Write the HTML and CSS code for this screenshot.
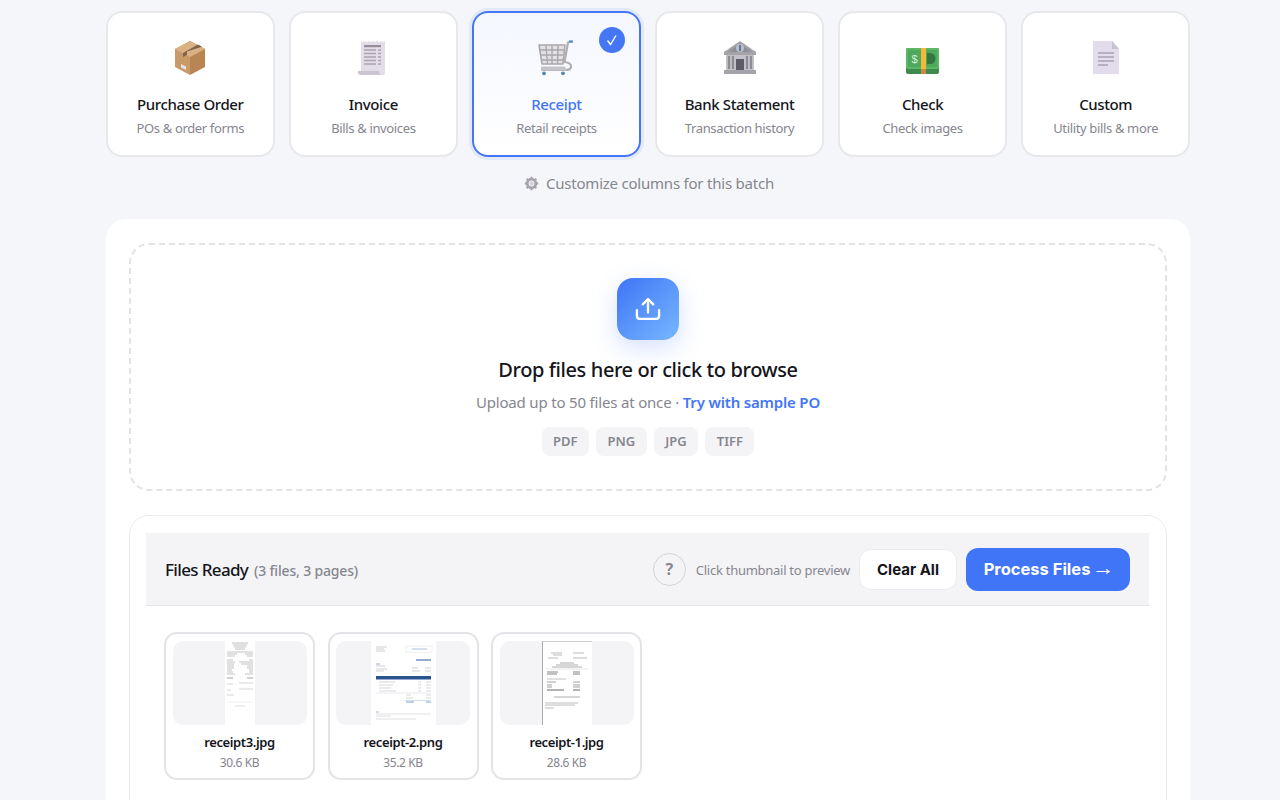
FILE: index.html
```html
<!DOCTYPE html>
<html>
<head>
  <title>Document Extractor</title>
  <link rel="stylesheet" href="styles.css">
</head>
<body>
  <div class="page">
    <div class="doc-types">
      <div class="doc-card">
        <svg class="doc-icon" viewBox="0 0 36 36">
          <path d="M18 1 L33 9 V27 L18 35 Z" fill="#b98553"/>
          <path d="M18 1 L3 9 V27 L18 35 Z" fill="#c99a68"/>
          <path d="M18 1 L33 9 L18 17 L3 9 Z" fill="#d9b183"/>
          <path d="M26 4.5 L11 13 V17 L15 15 L15 11.5 L30 6.8 Z" fill="#7f6450"/>
          <path d="M9 24 L14 26.5 V30 L9 27.5 Z" fill="#e5e2e4"/>
        </svg>
        <div class="doc-name">Purchase Order</div>
        <div class="doc-sub">POs &amp; order forms</div>
      </div>
      <div class="doc-card">
        <svg class="doc-icon" viewBox="0 0 36 36">
          <path d="M6 1 L8 2 L10 1 L12 2 L14 1 L16 2 L18 1 L20 2 L22 1 L24 2 L26 1 L28 2 L30 1 V33 C30 35 28 35 27 35 H8 C5 35 2 34 3 31 H6 Z" fill="#e2dde7"/>
          <path d="M3 31 H24 C24 33 25 35 27 35 H8 C5 35 2 34 3 31 Z" fill="#cbc5d2"/>
          <rect x="9" y="5" width="17" height="2.2" fill="#968d9d"/>
          <path d="M9 10 H21 M23 10 H26 M9 13.5 H21 M23 13.5 H26 M9 17 H21 M23 17 H26 M9 20.5 H21 M23 20.5 H26 M9 24 H21 M23 24 H26" stroke="#aca3b3" stroke-width="1.3"/>
        </svg>
        <div class="doc-name">Invoice</div>
        <div class="doc-sub">Bills &amp; invoices</div>
      </div>
      <div class="doc-card selected">
        <span class="check-badge">
          <svg viewBox="0 0 14 14" width="14" height="14"><path d="M2.5 7.5 L5.5 11.5 L11 2.5" fill="none" stroke="#fff" stroke-width="1.4"/></svg>
        </span>
        <svg class="doc-icon" viewBox="0 0 36 36">
          <path d="M1 5 H27 L25 24 H4 Z" fill="#e2e1e4" stroke="#a9a7ac" stroke-width="1.6" stroke-linejoin="round"/>
          <path d="M2 10 H26 M3 15 H25.5 M3.5 20 H25 M8 5.5 L9.5 24 M14 5.5 V24 M20 5.5 L19.5 24" stroke="#a9a7ac" stroke-width="1.4"/>
          <path d="M34 1 L30 2.5 L26.5 22 C31 22.5 33.5 24 33 27 C32.5 30 29 30 27 30 H3" fill="none" stroke="#b0aeb3" stroke-width="2.2"/>
          <path d="M3 26.5 H26 C27.5 26.5 28 28 28 30.5 H3 Z" fill="#c6c4c9"/>
          <rect x="31" y="0.5" width="4" height="2.2" fill="#5b93c5"/>
          <circle cx="6" cy="33.3" r="1.9" fill="#4f88bb"/>
          <circle cx="25" cy="33.3" r="1.9" fill="#4f88bb"/>
        </svg>
        <div class="doc-name">Receipt</div>
        <div class="doc-sub">Retail receipts</div>
      </div>
      <div class="doc-card">
        <svg class="doc-icon" viewBox="0 0 36 36">
          <path d="M18 1 L34 12 V15 H2 V12 Z" fill="#a5a3aa"/>
          <path d="M18 3.5 L30 12 H6 Z" fill="#8f8d95"/>
          <circle cx="18" cy="8" r="4" fill="#c0bec5"/>
          <rect x="17" y="5" width="2" height="6" fill="#4d7fb3"/>
          <rect x="4" y="15" width="28" height="15" fill="#c4c2c8"/>
          <path d="M7 16 V29 M11 16 V29 M25 16 V29 M29 16 V29" stroke="#8d8b93" stroke-width="2.2"/>
          <rect x="14" y="19" width="8" height="11" fill="#5d5b63"/>
          <rect x="2" y="30" width="32" height="4" fill="#a5a3aa"/>
        </svg>
        <div class="doc-name">Bank Statement</div>
        <div class="doc-sub">Transaction history</div>
      </div>
      <div class="doc-card">
        <svg class="doc-icon" viewBox="0 0 36 36">
          <rect x="1" y="8" width="33" height="26" rx="2" fill="#3f8a4e"/>
          <rect x="1" y="8" width="33" height="21" rx="2" fill="#5cb866"/>
          <rect x="3" y="10" width="29" height="17" fill="#4fa85b"/>
          <path d="M22 13 H25 A5.5 5.5 0 0 1 25 24 H22 Z" fill="#34763f"/>
          <rect x="16" y="8" width="5" height="21" fill="#f3b93a"/>
          <rect x="16" y="29" width="5" height="5" fill="#c98a45"/>
          <text x="9.5" y="23" class="bill-sign">$</text>
        </svg>
        <div class="doc-name">Check</div>
        <div class="doc-sub">Check images</div>
      </div>
      <div class="doc-card">
        <svg class="doc-icon" viewBox="0 0 36 36">
          <path d="M5 1 H24 L31 9 V34 H5 Z" fill="#e2dcec"/>
          <path d="M24 1 L31 9 H24 Z" fill="#c7c2cf"/>
          <path d="M10 13 H26 M10 17 H26 M10 21 H26 M10 25 H20" stroke="#a8a1b2" stroke-width="1.5"/>
        </svg>
        <div class="doc-name">Custom</div>
        <div class="doc-sub">Utility bills &amp; more</div>
      </div>
    </div>

    <div class="customize">
      <svg viewBox="0 0 16 16" width="15" height="15">
        <circle cx="8" cy="8" r="4.6" fill="none" stroke="#a7a3ae" stroke-width="3"/>
        <path d="M8 0.8 V3 M8 13 V15.2 M0.8 8 H3 M13 8 H15.2 M2.9 2.9 L4.5 4.5 M11.5 11.5 L13.1 13.1 M2.9 13.1 L4.5 11.5 M11.5 4.5 L13.1 2.9" stroke="#a7a3ae" stroke-width="2.2"/>
        <circle cx="8" cy="8" r="2.4" fill="#d6d3da"/>
      </svg>
      Customize columns for this batch
    </div>

    <div class="panel">
      <div class="dropzone">
        <div class="upload-tile">
          <svg viewBox="0 0 24 24" width="28" height="28" fill="none" stroke="#fff" stroke-width="2" stroke-linecap="round" stroke-linejoin="round">
            <path d="M12 15 V3.5 M7.5 8 L12 3.5 L16.5 8"/>
            <path d="M2.5 13 V18 A2.5 2.5 0 0 0 5 20.5 H19 A2.5 2.5 0 0 0 21.5 18 V13"/>
          </svg>
        </div>
        <div class="drop-title">Drop files here or click to browse</div>
        <div class="drop-sub">Upload up to 50 files at once · <a class="sample-link">Try with sample PO</a></div>
        <div class="formats">
          <span class="format">PDF</span>
          <span class="format">PNG</span>
          <span class="format">JPG</span>
          <span class="format">TIFF</span>
        </div>
      </div>

      <div class="files-box">
        <div class="files-header">
          <div class="files-title">Files Ready <span class="files-count">(3 files, 3 pages)</span></div>
          <div class="files-actions">
            <span class="help">?</span>
            <span class="hint">Click thumbnail to preview</span>
            <button class="btn-clear">Clear All</button>
            <button class="btn-process">Process Files <span class="arrow">→</span></button>
          </div>
        </div>

        <div class="thumbs">
          <div class="thumb-card">
            <div class="thumb">
              <svg class="receipt-a" viewBox="0 0 30 84">
                <rect width="30" height="84" fill="#fff"/>
                <path d="M7 2 H23 M8 4 H22 M9 6 H21 M10 8 H20" stroke="#999" stroke-width="0.6"/>
                <path d="M2 11 H28 M2 13 H12 M20 13 H28 M2 15 H10 M22 15 H28 M2 19 H8 M24 19 H28 M2 21 H10 M14 21 H28 M2 23 H9 M16 23 H28 M2 25 H9 M22 25 H28 M2 27 H9 M22 27 H28 M2 29 H7 M24 29 H28 M2 31 H8 M24 31 H28 M2 33 H10 M20 33 H28" stroke="#aaa" stroke-width="0.7"/>
                <path d="M2 37 H8 M22 37 H28" stroke="#888" stroke-width="0.8"/>
                <path d="M2 43 H8 M14 42 H28 M2 49 H6 M14 48 H28 M2 54 H9" stroke="#bbb" stroke-width="0.6"/>
                <path d="M2 61 H28" stroke="#ddd" stroke-width="0.5"/>
                <path d="M10 65 H20" stroke="#ccc" stroke-width="0.7"/>
              </svg>
            </div>
            <div class="thumb-name">receipt3.jpg</div>
            <div class="thumb-size">30.6 KB</div>
          </div>
          <div class="thumb-card">
            <div class="thumb">
              <svg class="receipt-b" viewBox="0 0 65 84">
                <rect width="65" height="84" fill="#fff"/>
                <path d="M5 6 H16 M5 8 H13 M5 10 H14" stroke="#bbb" stroke-width="0.7"/>
                <rect x="35" y="5" width="26" height="6.5" fill="#fff" stroke="#e4e8f0" stroke-width="0.6"/>
                <path d="M41 8 H56" stroke="#a3b8d8" stroke-width="0.9"/>
                <path d="M45 19 H60" stroke="#6f91c4" stroke-width="1.6"/>
                <path d="M5 23 H9" stroke="#6f91c4" stroke-width="0.7"/>
                <path d="M5 25 H14 M5 28 H16 M5 30 H13 M41 27 H47 M54 27 H60 M41 30 H49 M54 30 H60" stroke="#bbb" stroke-width="0.7"/>
                <rect x="5" y="35" width="55" height="3.5" fill="#2a5390"/>
                <path d="M8 41 H24 M47 41 H50 M55 41 H60 M8 44 H22 M47 44 H50 M55 44 H60 M8 47 H20 M47 47 H50 M55 47 H60 M8 50 H25 M47 50 H50 M55 50 H60" stroke="#c6c6c6" stroke-width="0.7"/>
                <path d="M5 52 H60" stroke="#cdd6e4" stroke-width="0.5"/>
                <path d="M35 54 H40 M55 54 H60 M35 57 H42 M55 57 H60" stroke="#c6c6c6" stroke-width="0.7"/>
                <path d="M34 59.5 H60" stroke="#a9bcd8" stroke-width="0.5"/>
                <path d="M35 61 H43 M55 61 H60" stroke="#6685b3" stroke-width="0.8"/>
                <path d="M5 71 H8" stroke="#6f91c4" stroke-width="0.6"/>
                <path d="M5 73 H60 M5 75 H20 M5 78 H45" stroke="#ccc" stroke-width="0.6"/>
              </svg>
            </div>
            <div class="thumb-name">receipt-2.png</div>
            <div class="thumb-size">35.2 KB</div>
          </div>
          <div class="thumb-card">
            <div class="thumb">
              <svg class="receipt-c" viewBox="0 0 50 84">
                <rect width="50" height="84" fill="#fff"/>
                <rect width="1" height="84" fill="#aaa"/>
                <rect width="50" height="0.7" fill="#bbb"/>
                <path d="M9 12 H20 M31 12 H42 M11 14 H20 M6 17 H16 M31 17 H45" stroke="#aaa" stroke-width="0.8"/>
                <path d="M18 22 H32 M14 24 H36 M10 26 H40" stroke="#999" stroke-width="0.8"/>
                <path d="M4 28 H46" stroke="#ccc" stroke-width="0.5"/>
                <path d="M5 31 H16 M31 31 H38 M5 33 H15 M31 33 H38" stroke="#777" stroke-width="0.9"/>
                <path d="M5 38 H24" stroke="#aaa" stroke-width="0.7"/>
                <path d="M5 41 H14 M31 41 H38 M5 44 H10 M31 44 H38 M5 46 H10 M31 46 H38" stroke="#999" stroke-width="0.9"/>
                <path d="M5 49 H22 M31 49 H38" stroke="#666" stroke-width="1"/>
                <path d="M12 56 H38" stroke="#999" stroke-width="0.8"/>
                <path d="M3 62 H36 M3 64 H33 M3 67 H12" stroke="#aaa" stroke-width="0.8"/>
              </svg>
            </div>
            <div class="thumb-name">receipt-1.jpg</div>
            <div class="thumb-size">28.6 KB</div>
          </div>
        </div>
      </div>
    </div>
  </div>
</body>
</html>
```

FILE: styles.css
```css
/* page */
html, body {
  height: 800px;
  overflow: hidden;
}

body {
  margin: 0;
  background-color: #f5f6fa;
  font-family: "Noto Sans", Arial, sans-serif;
  color: #15151c;
}

.page {
  width: 1084px;
  height: 800px;
  box-sizing: border-box;
  margin-left: 106px;
  padding-top: 11px;
  overflow: hidden;
}

/* document type cards */
.doc-types {
  display: grid;
  grid-template-columns: repeat(6, 1fr);
  gap: 14.4px;
  padding: 0 0 4px;
}

.doc-card {
  position: relative;
  height: 146px;
  box-sizing: border-box;
  border: 2px solid #e8e8ec;
  border-radius: 16px;
  background-color: #fff;
  display: flex;
  flex-direction: column;
  align-items: center;
  padding-top: 27px;
}

.doc-card.selected {
  border-color: #4476f6;
  background: linear-gradient(180deg, #f5f7ff 0%, #fff 100%);
  box-shadow: 0 0 0 3px rgba(68, 118, 246, 0.1);
}

.doc-card.selected .doc-name {
  color: #4476f6;
}

.doc-icon {
  width: 36px;
  height: 36px;
  margin-bottom: 18px;
}

.bill-sign {
  font-family: "Liberation Sans", sans-serif;
  font-size: 11px;
  fill: #d8f0da;
  text-anchor: middle;
}

.doc-name {
  font-size: 15px;
  font-weight: 550;
  line-height: 20px;
  letter-spacing: -0.38px;
  margin-bottom: 4px;
}

.doc-sub {
  font-size: 13px;
  line-height: 20px;
  letter-spacing: -0.35px;
  color: #86868f;
}

.check-badge {
  position: absolute;
  top: 14px;
  right: 14px;
  width: 26px;
  height: 26px;
  border-radius: 50%;
  background-color: #4476f6;
  display: flex;
  align-items: center;
  justify-content: center;
}

.customize {
  display: flex;
  justify-content: center;
  align-items: center;
  gap: 7px;
  height: 20px;
  margin-top: 12px;
  padding-left: 2px;
  font-size: 15px;
  letter-spacing: -0.22px;
  color: #86868f;
}

/* main panel */
.panel {
  margin-top: 26px;
  background-color: #fff;
  border-radius: 20px;
  padding: 24px 23px 60px;
}

.dropzone {
  height: 248px;
  box-sizing: border-box;
  border: 2px dashed #e2e2e7;
  border-radius: 20px;
  display: flex;
  flex-direction: column;
  align-items: center;
  padding-top: 33px;
}

.upload-tile {
  width: 62px;
  height: 62px;
  border-radius: 16px;
  background: linear-gradient(135deg, #3f74f6 0%, #76b8fe 100%);
  box-shadow: 0 8px 24px rgba(68, 118, 246, 0.22);
  display: flex;
  align-items: center;
  justify-content: center;
}

.drop-title {
  margin-top: 16px;
  font-size: 20px;
  font-weight: 550;
  line-height: 28px;
  letter-spacing: -0.4px;
}

.drop-sub {
  margin-top: 8px;
  font-size: 15px;
  line-height: 20px;
  letter-spacing: -0.18px;
  color: #86868f;
}

.sample-link {
  color: #4476f6;
  font-weight: 600;
}

.formats {
  display: flex;
  gap: 7px;
  margin-top: 15px;
}

.format {
  padding: 0 11.5px;
  height: 29px;
  line-height: 29px;
  border-radius: 8px;
  background-color: #f4f4f7;
  font-size: 13px;
  font-weight: 600;
  color: #86868f;
}

/* files list */
.files-box {
  margin-top: 24px;
  border: 1px solid #ececf0;
  border-radius: 20px;
  padding: 17px 17px 60px 16px;
}

.files-header {
  height: 73px;
  box-sizing: border-box;
  background-color: #f4f4f7;
  border-bottom: 1px solid #e4e4e8;
  display: flex;
  align-items: center;
  justify-content: space-between;
  padding: 0 19px 0 19px;
}

.files-title {
  font-size: 17px;
  font-weight: 550;
  letter-spacing: -0.65px;
}

.files-count {
  margin-left: 2px;
  font-size: 14px;
  font-weight: 500;
  letter-spacing: -0.17px;
  color: #86868f;
}

.files-actions {
  display: flex;
  align-items: center;
}

.help {
  width: 33px;
  height: 33px;
  box-sizing: border-box;
  border: 1px solid #d3d3d8;
  border-radius: 50%;
  display: flex;
  align-items: center;
  justify-content: center;
  font-size: 16px;
  font-weight: 700;
  color: #86868f;
  margin-right: 10px;
}

.hint {
  margin-top: 2px;
  font-size: 13px;
  letter-spacing: -0.27px;
  color: #86868f;
  margin-right: 9px;
}

.btn-clear, .btn-process {
  font-family: Inter, Arial, sans-serif;
  font-weight: 700;
  cursor: pointer;
  border-radius: 12px;
}

.btn-clear {
  width: 98px;
  height: 41px;
  padding: 0;
  font-size: 15px;
  color: #15151c;
  background-color: #fff;
  border: 1px solid #ececf0;
  margin-right: 9px;
}

.btn-process {
  width: 164px;
  height: 43px;
  padding: 0;
  font-size: 16.5px;
  color: #fff;
  background-color: #4175f7;
  border: none;
}

.arrow {
  font-family: "Liberation Sans", sans-serif;
  font-size: 22px;
  font-weight: 400;
  line-height: 0;
  margin: 0 -2px 0 -2px;
}

.thumbs {
  display: flex;
  gap: 12.5px;
  padding: 26px 18px 0;
}

.thumb-card {
  width: 151px;
  height: 148px;
  box-sizing: border-box;
  border: 2px solid #e4e4e8;
  border-radius: 13px;
  padding: 7px 6.5px 0;
  text-align: center;
}

.thumb {
  height: 84px;
  background-color: #f4f4f7;
  border-radius: 10px;
  display: flex;
  justify-content: center;
  overflow: hidden;
}

.thumb svg {
  height: 84px;
}

.receipt-a { width: 30px; }
.receipt-b { width: 65px; }
.receipt-c { width: 50px; }

.thumb-name {
  margin-top: 8px;
  font-size: 13px;
  font-weight: 600;
  line-height: 18px;
  letter-spacing: -0.4px;
}

.thumb-size {
  margin-top: 4px;
  font-size: 12px;
  line-height: 16px;
  letter-spacing: -0.4px;
  color: #86868f;
}
```
